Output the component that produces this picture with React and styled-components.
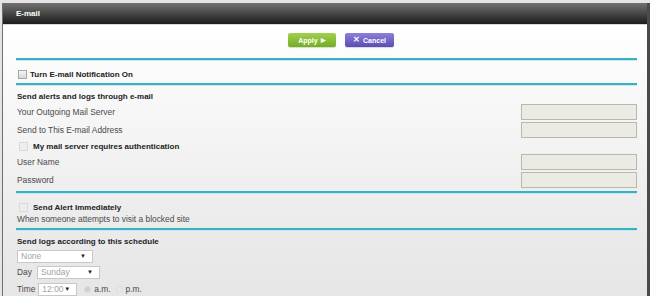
import React from "react";
import styled, { createGlobalStyle } from "styled-components";

const Global = createGlobalStyle`
  *, *::before, *::after { box-sizing: border-box; }
  html, body { margin: 0; padding: 0; background: #e2e2e2; overflow: hidden; }
  body { font-family: "Liberation Sans", Arial, sans-serif; font-size: 8.4px; color: #444; }
`;

const Frame = styled.div`
  width: 650px;
  height: 296px;
  padding-top: 3px;
  background: #e4e4e4;
  display: flex;
  flex-direction: column;
  overflow: hidden;
`;

const Panel = styled.div`
  flex: 1;
  margin-left: 2px;
  border-left: 1px solid #6f6f6f;
  border-right: 3px solid #4a4a4a;
  display: flex;
  flex-direction: column;
  overflow: hidden;
`;

const Header = styled.div`
  height: 22px;
  flex: none;
  display: flex;
  align-items: center;
  padding-left: 13px;
  background: linear-gradient(#727272, #424242 55%, #1c1c1c);
  border-bottom: 1px solid #d8d8d8;
  color: #fff;
  font-weight: bold;
  font-size: 8px;
`;

const Body = styled.div`
  flex: 1;
  background: linear-gradient(#ffffff 0%, #f7f7f7 30%, #ececec 70%, #e6e6e6 100%);
  padding: 0 10px 0 13px;
  display: flex;
  flex-direction: column;
`;

const ButtonBar = styled.div`
  display: flex;
  justify-content: center;
  gap: 9px;
  padding: 8px 0 11px 29px;
  flex: none;
`;

const Btn = styled.button`
  height: 14px;
  width: ${(p) => p.$w}px;
  border: none;
  border-radius: 2px;
  padding: 0;
  color: #fff;
  font-family: "Liberation Sans", Arial, sans-serif;
  font-size: 7px;
  font-weight: bold;
  display: flex;
  align-items: center;
  justify-content: center;
  gap: 3px;
  background: ${(p) =>
    p.$kind === "apply"
      ? "linear-gradient(#a2d052, #74ad22)"
      : "linear-gradient(#8c80da, #5a4cb6)"};
  box-shadow: 0 1px 1px rgba(0,0,0,0.15);
`;

const Glyph = styled.span`
  font-size: ${(p) => p.$size}px;
  line-height: 1;
`;

const Divider = styled.div`
  height: 2px;
  flex: none;
  background: #35b2c4;
  box-shadow: 0 1px 0 #c6e8ee;
`;

const Row = styled.div`
  height: ${(p) => p.$h || 18}px;
  padding-top: ${(p) => p.$pt || 0}px;
  display: flex;
  align-items: center;
  justify-content: space-between;
  padding-left: ${(p) => p.$indent || 0}px;
  font-weight: ${(p) => (p.$bold ? "bold" : "normal")};
  font-size: ${(p) => (p.$bold ? "8px" : "8.4px")};
  color: ${(p) => (p.$bold ? "#222" : "#4a4a4a")};
  flex: none;
`;

const Spacer = styled.div`
  height: ${(p) => p.$h}px;
  flex: none;
`;

const CheckLabel = styled.label`
  display: flex;
  align-items: center;
  gap: ${(p) => p.$gap || 4}px;
  font-weight: bold;
  font-size: 8px;
  color: #222;
`;

const Box = styled.span`
  width: 9px;
  height: 9px;
  border: 1px solid ${(p) => (p.$disabled ? "#dadada" : "#a8a8a8")};
  background: ${(p) => (p.$disabled ? "#ededed" : "linear-gradient(#f6f6f6, #d8d8d8)")};
  display: inline-block;
  flex: none;
`;

const Field = styled.span`
  width: 116px;
  height: 16px;
  border: 1px solid #b8b8b0;
  background: #ebebe3;
  display: inline-block;
`;

const Select = styled.span`
  width: ${(p) => p.$w}px;
  height: 13px;
  border: 1px solid #c8c8c8;
  background: #fff;
  color: #a4a4a4;
  font-size: 8.5px;
  display: inline-flex;
  align-items: center;
  justify-content: space-between;
  padding: 0 6px 0 3px;
  margin-left: ${(p) => p.$ml || 0}px;
`;

const Arrow = styled.span`
  color: #222;
  font-size: 6px;
`;

const Inline = styled.div`
  height: 14px;
  margin-top: ${(p) => p.$mt || 0}px;
  padding-left: 1px;
  display: flex;
  align-items: center;
  color: #4a4a4a;
  flex: none;
`;

const Radio = styled.span`
  width: 7px;
  height: 7px;
  border-radius: 50%;
  background: ${(p) => (p.$on ? "#d0d0d0" : "#e8e8e8")};
  border: 1px solid #dcdcdc;
  margin: 0 3px 0 ${(p) => p.$ml || 0}px;
  display: inline-block;
`;

export default function App() {
  return (
    <>
      <Global />
      <Frame>
        <Panel>
          <Header>E-mail</Header>
          <Body>
            <ButtonBar>
              <Btn $kind="apply" $w={48}>Apply <Glyph $size={6}>▶</Glyph></Btn>
              <Btn $kind="cancel" $w={49}><Glyph $size={8}>✕</Glyph>Cancel</Btn>
            </ButtonBar>
            <Divider />
            <Row $h={23} $pt={6} $indent={2}>
              <CheckLabel $gap={3}><Box />Turn E-mail Notification On</CheckLabel>
            </Row>
            <Divider />
            <Row $h={18} $pt={4} $bold $indent={1}>Send alerts and logs through e-mail</Row>
            <Row $indent={1}>Your Outgoing Mail Server<Field /></Row>
            <Row $indent={1}>Send to This E-mail Address<Field /></Row>
            <Row $h={14} $indent={3}>
              <CheckLabel $gap={5}><Box $disabled />My mail server requires authentication</CheckLabel>
            </Row>
            <Row $indent={1}>User Name<Field /></Row>
            <Row $indent={1}>Password<Field /></Row>
            <Spacer $h={2} />
            <Divider />
            <Spacer $h={7} />
            <Row $h={14} $indent={3}>
              <CheckLabel $gap={5}><Box $disabled />Send Alert Immediately</CheckLabel>
            </Row>
            <Row $h={9} $indent={1}>When someone attempts to visit a blocked site</Row>
            <Spacer $h={5} />
            <Divider />
            <Row $h={19} $pt={3} $bold $indent={1}>Send logs according to this schedule</Row>
            <Inline>
              <Select $w={76}>None<Arrow>▼</Arrow></Select>
            </Inline>
            <Inline $mt={2}>
              Day<Select $w={63} $ml={5}>Sunday<Arrow>▼</Arrow></Select>
            </Inline>
            <Inline $mt={3}>
              Time<Select $w={39} $ml={3}>12:00<Arrow>▼</Arrow></Select>
              <Radio $on $ml={7} />a.m.
              <Radio $ml={5} />p.m.
            </Inline>
          </Body>
        </Panel>
      </Frame>
    </>
  );
}
